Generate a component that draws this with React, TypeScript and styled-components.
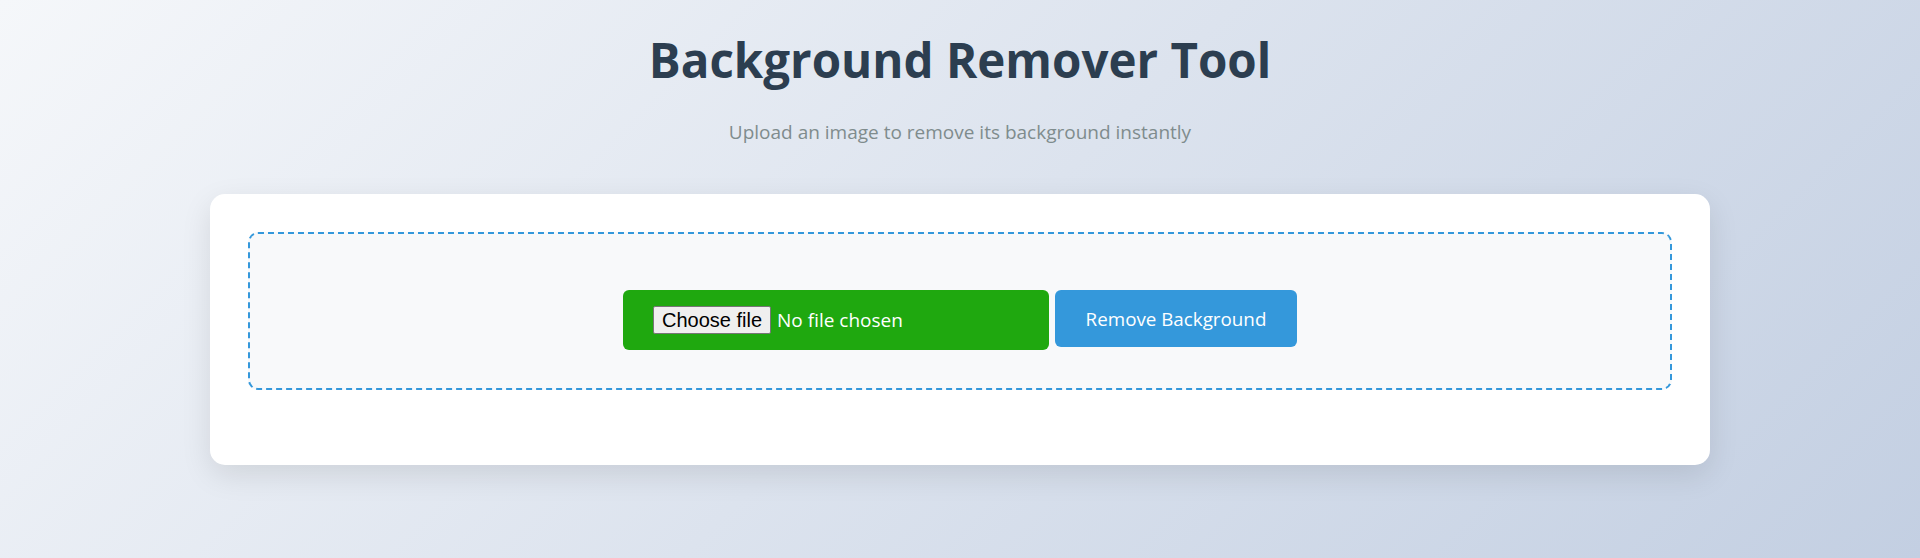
import React, { useState } from "react";
import styled, { createGlobalStyle } from "styled-components";

const GlobalStyle = createGlobalStyle`
  * { box-sizing: border-box; }
  html, body { margin: 0; padding: 0; }
  body {
    min-height: 100vh;
    font-family: "Open Sans", "Noto Sans", sans-serif;
    background: linear-gradient(135deg, #f5f7fa 0%, #c3cfe2 100%);
    background-attachment: fixed;
  }
`;

const Page = styled.div`
  min-height: 100vh;
  padding-top: 30px;
`;

const Container = styled.main`
  max-width: 1500px;
  margin: 0 auto;
`;

const Header = styled.header`
  text-align: center;
`;

const Title = styled.h1`
  margin: 0;
  font-size: 47.5px;
  line-height: 60px;
  font-weight: 700;
  color: #2c3e50;
`;

const Subtitle = styled.p`
  margin: 30px 0 0;
  font-size: 19px;
  line-height: 24px;
  color: #7f8c8d;
`;

const Card = styled.section`
  margin-top: 50px;
  background: #ffffff;
  border-radius: 15px;
  padding: 38px 38px 75px;
  box-shadow: 0 10px 30px rgba(0, 0, 0, 0.1);
`;

const DropZone = styled.div`
  border: 2px dashed #3498db;
  border-radius: 10px;
  background: #f8f9fa;
  padding: 56px 20px 38px;
  display: flex;
  justify-content: center;
  align-items: flex-start;
  gap: 6px;
`;

const FilePicker = styled.label`
  width: 426px;
  height: 60px;
  padding: 16px 30px 0;
  border-radius: 6px;
  background: #1fa80f;
  color: #ffffff;
  display: flex;
  align-items: baseline;
  gap: 6px;
  font-family: "Open Sans", "Noto Sans", sans-serif;
  font-size: 19px;
  cursor: pointer;
`;

const HiddenInput = styled.input`
  position: absolute;
  width: 1px;
  height: 1px;
  opacity: 0;
  overflow: hidden;
  pointer-events: none;
`;

const PickButton = styled.span`
  display: inline-block;
  height: 28px;
  padding: 0 8px;
  line-height: 26px;
  font-family: "Liberation Sans", Arial, sans-serif;
  font-size: 20px;
  color: #000000;
  background: #efefef;
  border: 1px solid #767676;
  border-radius: 2px;
`;

const FileName = styled.span`
  white-space: nowrap;
  overflow: hidden;
  text-overflow: ellipsis;
`;

const ActionButton = styled.button`
  width: 242px;
  height: 57px;
  padding: 15px 30px;
  border: none;
  border-radius: 6px;
  background: #3498db;
  color: #ffffff;
  font-family: "Open Sans", "Noto Sans", sans-serif;
  font-size: 18.8px;
  cursor: pointer;
`;

export default function App() {
  const [fileName, setFileName] = useState<string>("");
  return (
    <>
      <GlobalStyle />
      <Page>
        <Container>
          <Header>
            <Title>Background Remover Tool</Title>
            <Subtitle>Upload an image to remove its background instantly</Subtitle>
          </Header>
          <Card>
            <DropZone>
              <FilePicker>
                <HiddenInput
                  type="file"
                  accept="image/*"
                  onChange={(e) => setFileName(e.target.files?.[0]?.name ?? "")}
                />
                <PickButton>Choose file</PickButton>
                <FileName>{fileName || "No file chosen"}</FileName>
              </FilePicker>
              <ActionButton type="button">Remove Background</ActionButton>
            </DropZone>
          </Card>
        </Container>
      </Page>
    </>
  );
}
